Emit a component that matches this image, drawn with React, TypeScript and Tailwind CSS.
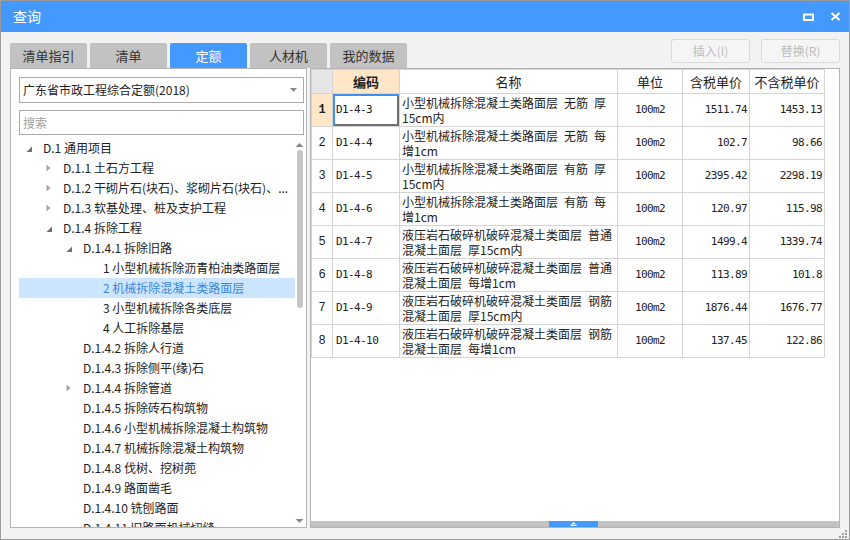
import React from "react";

type TreeNode = {
  level: number;
  text: string;
  arrow?: "open" | "closed";
  selected?: boolean;
};

const tree: TreeNode[] = [
  { level: 0, text: "D.1 通用项目", arrow: "open" },
  { level: 1, text: "D.1.1 土石方工程", arrow: "closed" },
  { level: 1, text: "D.1.2 干砌片石(块石)、浆砌片石(块石)、...", arrow: "closed" },
  { level: 1, text: "D.1.3 软基处理、桩及支护工程", arrow: "closed" },
  { level: 1, text: "D.1.4 拆除工程", arrow: "open" },
  { level: 2, text: "D.1.4.1 拆除旧路", arrow: "open" },
  { level: 3, text: "1 小型机械拆除沥青柏油类路面层" },
  { level: 3, text: "2 机械拆除混凝土类路面层", selected: true },
  { level: 3, text: "3 小型机械拆除各类底层" },
  { level: 3, text: "4 人工拆除基层" },
  { level: 2, text: "D.1.4.2 拆除人行道" },
  { level: 2, text: "D.1.4.3 拆除侧平(缘)石" },
  { level: 2, text: "D.1.4.4 拆除管道", arrow: "closed" },
  { level: 2, text: "D.1.4.5 拆除砖石构筑物" },
  { level: 2, text: "D.1.4.6 小型机械拆除混凝土构筑物" },
  { level: 2, text: "D.1.4.7 机械拆除混凝土构筑物" },
  { level: 2, text: "D.1.4.8 伐树、挖树蔸" },
  { level: 2, text: "D.1.4.9 路面凿毛" },
  { level: 2, text: "D.1.4.10 铣刨路面" },
  { level: 2, text: "D.1.4.11 旧路面机械切缝" },
];

const indent = ["pl-0", "pl-[20px]", "pl-[40px]", "pl-[60px]"];

// en space (\u2002) keeps the half-width gap of the original grid font
const rows = [
  { code: "D1-4-3", name: ["小型机械拆除混凝土类路面层\u2002无筋\u2002厚", "15cm内"], p1: "1511.74", p2: "1453.13" },
  { code: "D1-4-4", name: ["小型机械拆除混凝土类路面层\u2002无筋\u2002每", "增1cm"], p1: "102.7", p2: "98.66" },
  { code: "D1-4-5", name: ["小型机械拆除混凝土类路面层\u2002有筋\u2002厚", "15cm内"], p1: "2395.42", p2: "2298.19" },
  { code: "D1-4-6", name: ["小型机械拆除混凝土类路面层\u2002有筋\u2002每", "增1cm"], p1: "120.97", p2: "115.98" },
  { code: "D1-4-7", name: ["液压岩石破碎机破碎混凝土类面层\u2002普通", "混凝土面层\u2002厚15cm内"], p1: "1499.4", p2: "1339.74" },
  { code: "D1-4-8", name: ["液压岩石破碎机破碎混凝土类面层\u2002普通", "混凝土面层\u2002每增1cm"], p1: "113.89", p2: "101.8" },
  { code: "D1-4-9", name: ["液压岩石破碎机破碎混凝土类面层\u2002钢筋", "混凝土面层\u2002厚15cm内"], p1: "1876.44", p2: "1676.77" },
  { code: "D1-4-10", name: ["液压岩石破碎机破碎混凝土类面层\u2002钢筋", "混凝土面层\u2002每增1cm"], p1: "137.45", p2: "122.86" },
];

const tabs = ["清单指引", "清单", "定额", "人材机", "我的数据"];

function Arrow({ kind }: { kind?: "open" | "closed" }) {
  if (kind === "open") {
    return (
      <svg width="7" height="7" viewBox="0 0 7 7" className="mt-[3px]">
        <polygon points="6,0.5 6,6 0.5,6" fill="#707070" />
      </svg>
    );
  }
  if (kind === "closed") {
    return (
      <svg width="5" height="8" viewBox="0 0 5 8">
        <polygon points="0.5,0.5 4.5,4 0.5,7.5" fill="#a6a6a6" />
      </svg>
    );
  }
  return null;
}

const mono = "font-['DejaVu_Sans_Mono','Noto_Sans_CJK_SC',monospace] text-[11px] tracking-[-0.6px]";
const cell = "border border-[#d4d4d4]";

export default function App() {
  return (
    <div className="w-[850px] h-[540px] flex flex-col border border-[#9c9c9c] bg-[#f2f2f2] overflow-hidden font-['Noto_Sans_CJK_SC',sans-serif] text-[#222]">
      {/* title bar */}
      <div className="h-[31px] shrink-0 bg-[#4499ff] flex items-center justify-between pl-[12px] pr-[8px]">
        <span className="text-white text-[14px]">查询</span>
        <div className="flex items-center gap-[16px]">
          <svg width="11" height="8" viewBox="0 0 11 8">
            <rect x="1" y="1.5" width="9" height="5.5" fill="none" stroke="#fff" strokeWidth="2" />
          </svg>
          <svg width="11" height="9" viewBox="0 0 11 9">
            <path d="M1.5 1 L9.5 8 M9.5 1 L1.5 8" stroke="#fff" strokeWidth="2" />
          </svg>
        </div>
      </div>

      {/* tabs + buttons */}
      <div className="h-[36px] shrink-0 flex justify-between pl-[9px] pr-[9px]">
        <div className="flex items-end gap-[3px]">
          {tabs.map(t => (
            <div
              key={t}
              className={
                "w-[77px] h-[25px] rounded-t-[2px] flex items-center justify-center text-[13px] " +
                (t === "定额" ? "bg-[#4499ff] text-white" : "bg-[#c2c2c2] text-[#333]")
              }
            >
              {t}
            </div>
          ))}
        </div>
        <div className="flex gap-[11px] pt-[7px]">
          <button className="w-[79px] h-[24px] border border-[#dadada] rounded-[3px] bg-[#f5f5f5] text-[#bcbcbc] text-[12px]">
            插入(I)
          </button>
          <button className="w-[79px] h-[24px] border border-[#dadada] rounded-[3px] bg-[#f5f5f5] text-[#bcbcbc] text-[12px]">
            替换(R)
          </button>
        </div>
      </div>

      {/* main area */}
      <div className="h-[460px] shrink-0 flex gap-[3px] pl-[9px] pr-[9px]">
        {/* left panel */}
        <div className="w-[297px] h-full bg-white border border-[#b4b4b4] flex flex-col pt-[8px] pl-[8px] pr-[2px]">
          <div className="h-[26px] shrink-0 border border-[#ababab] flex items-center justify-between pl-[3px] pr-[6px] text-[12px]">
            <span>广东省市政工程综合定额(2018)</span>
            <svg width="7" height="4" viewBox="0 0 7 4">
              <polygon points="0,0 7,0 3.5,4" fill="#8a8a8a" />
            </svg>
          </div>
          <input
            placeholder="搜索"
            className="h-[25px] shrink-0 mt-[7px] border border-[#ababab] pl-[3px] text-[12px] outline-none placeholder:text-[#a0a0a0]"
          />
          <div className="flex-1 flex min-h-0 mt-[3px] overflow-hidden">
            <div className="w-[276px] flex flex-col">
              {tree.map((n, i) => (
                <div
                  key={i}
                  className={
                    "h-[20px] shrink-0 flex items-center whitespace-nowrap text-[12px] " +
                    indent[n.level] +
                    (n.selected ? " bg-[#cce6ff] text-[#3d86dc]" : "")
                  }
                >
                  <span className="w-[24px] shrink-0 flex items-center pl-[7px]">
                    <Arrow kind={n.arrow} />
                  </span>
                  <span>{n.text}</span>
                </div>
              ))}
            </div>
            <div className="w-[9px] flex flex-col items-center pt-[4px] pb-[3px]">
              <svg width="9" height="5" viewBox="0 0 9 5">
                <polygon points="0.5,5 4.5,1 8.5,5" fill="#8a8a8a" />
              </svg>
              <div className="w-[6px] h-[158px] mt-[3px] rounded-full bg-[#c6c6c6]" />
              <div className="flex-1" />
              <svg width="9" height="5" viewBox="0 0 9 5">
                <polygon points="0.5,0 8.5,0 4.5,4" fill="#8a8a8a" />
              </svg>
            </div>
          </div>
        </div>

        {/* right panel */}
        <div className="flex-1 h-full bg-white border border-[#b4b4b4] flex flex-col">
          <div className="flex-1 overflow-hidden">
            <table className="table-fixed border-collapse w-[513px] text-[12px]">
              <colgroup>
                <col className="w-[21px]" />
                <col className="w-[67px]" />
                <col className="w-[218px]" />
                <col className="w-[65px]" />
                <col className="w-[67px]" />
                <col className="w-[75px]" />
              </colgroup>
              <thead>
                <tr className="h-[24px]">
                  <th className={cell + " bg-[#e6e6e6]"} />
                  <th className={cell + " bg-[#ffe6c7] font-bold text-[13px]"}>编码</th>
                  <th className={cell + " font-normal text-[13px]"}>名称</th>
                  <th className={cell + " font-normal text-[13px]"}>单位</th>
                  <th className={cell + " font-normal text-[13px]"}>含税单价</th>
                  <th className={cell + " font-normal text-[13px]"}>不含税单价</th>
                </tr>
              </thead>
              <tbody>
                {rows.map((r, i) => (
                  <tr key={r.code} className="h-[33px]">
                    <td
                      className={
                        cell +
                        " text-center font-['Liberation_Mono',monospace] text-[12px] " +
                        (i === 0 ? "bg-[#ffe6c7] font-bold" : "")
                      }
                    >
                      {i + 1}
                    </td>
                    <td
                      className={
                        cell +
                        " " +
                        mono +
                        " pl-[3px] " +
                        (i === 0 ? "shadow-[inset_2px_2px_0_#3f8ff0,inset_-2px_-2px_0_#6e6e6e]" : "")
                      }
                    >
                      {r.code}
                    </td>
                    <td className={cell + " pl-[2px] leading-[15px] text-[12px] whitespace-nowrap overflow-hidden"}>
                      {r.name[0]}
                      <br />
                      {r.name[1]}
                    </td>
                    <td className={cell + " " + mono + " text-center"}>100m2</td>
                    <td className={cell + " " + mono + " text-right pr-[2px]"}>{r.p1}</td>
                    <td className={cell + " " + mono + " text-right pr-[2px]"}>{r.p2}</td>
                  </tr>
                ))}
              </tbody>
            </table>
          </div>
          <div className="h-[6px] shrink-0 bg-[#c2c2c2] flex">
            <div className="w-[238px]" />
            <div className="w-[49px] h-full bg-[#4499ff] flex items-center justify-center">
              <svg width="7" height="4" viewBox="0 0 7 4">
                <polygon points="3.5,0 5.5,2 1.5,2" fill="#fff" />
                <rect x="0.5" y="2.5" width="6" height="1.5" fill="#fff" />
              </svg>
            </div>
          </div>
        </div>
      </div>

      {/* bottom strip with resize grip */}
      <div className="flex-1 flex justify-end items-end pr-[2px] pb-[1px]">
        <svg width="8" height="8" viewBox="0 0 8 8">
          <rect x="6" y="0" width="2" height="2" fill="#a3a3a3" />
          <rect x="3" y="3" width="2" height="2" fill="#a3a3a3" />
          <rect x="6" y="3" width="2" height="2" fill="#a3a3a3" />
          <rect x="0" y="6" width="2" height="2" fill="#a3a3a3" />
          <rect x="3" y="6" width="2" height="2" fill="#a3a3a3" />
          <rect x="6" y="6" width="2" height="2" fill="#a3a3a3" />
        </svg>
      </div>
    </div>
  );
}
